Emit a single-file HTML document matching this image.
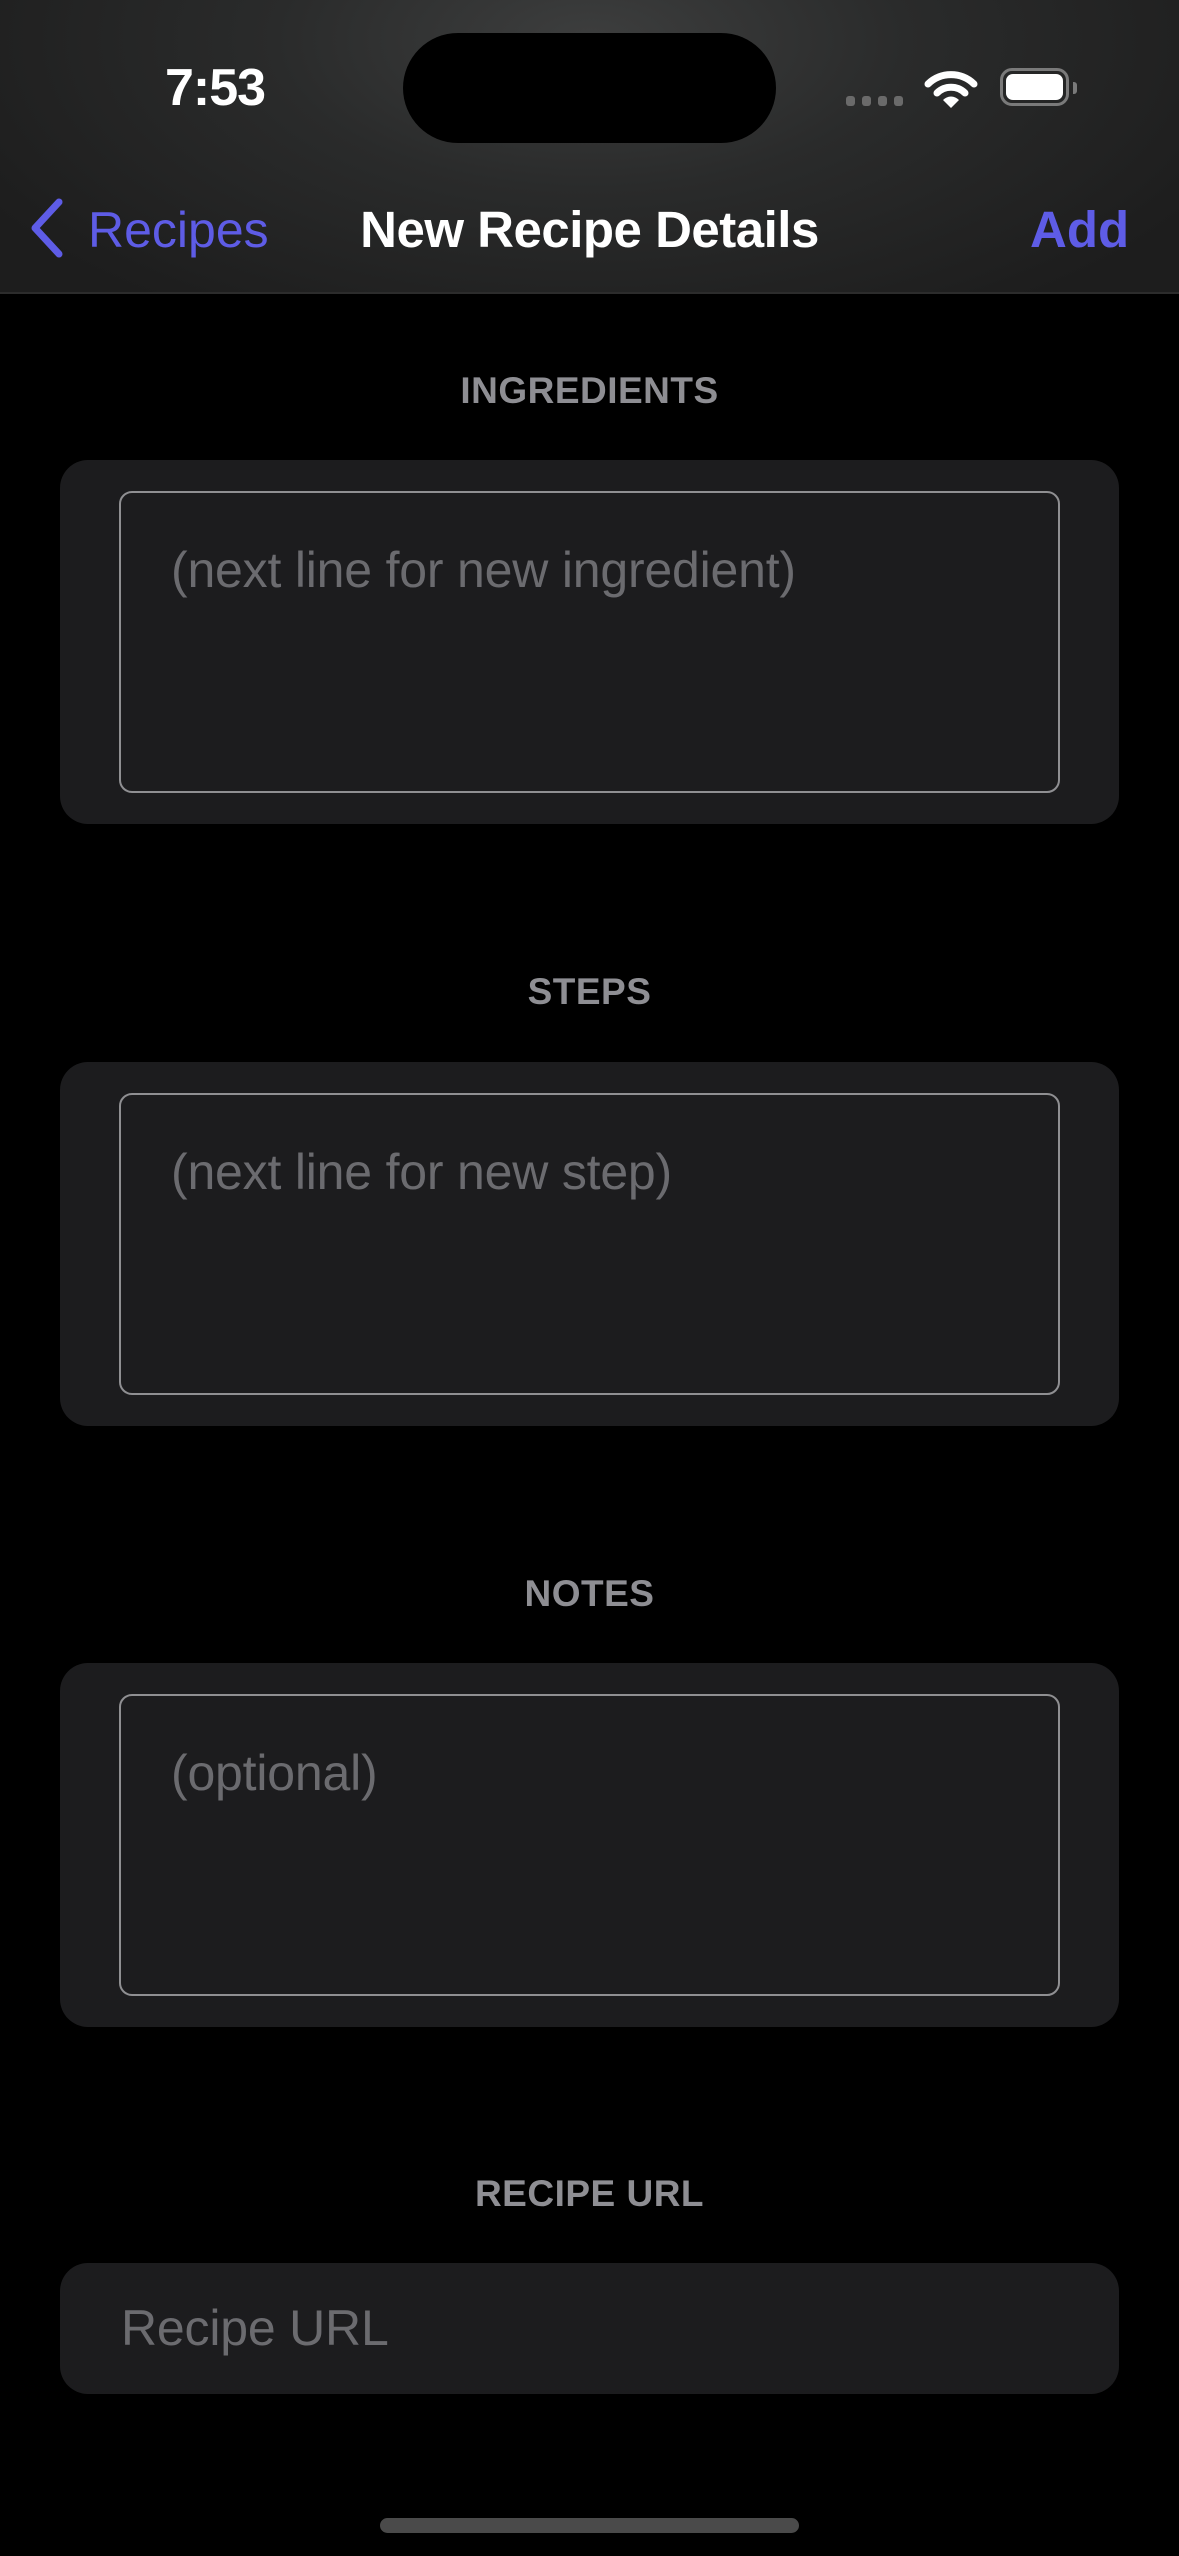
<!DOCTYPE html>
<html><head><meta charset="utf-8">
<style>
*{margin:0;padding:0;box-sizing:border-box}
html,body{width:1179px;height:2556px;background:#000;overflow:hidden}
body{position:relative;font-family:"Liberation Sans",sans-serif;-webkit-font-smoothing:antialiased}
.nav{position:absolute;left:0;top:0;width:1179px;height:294px;background:radial-gradient(ellipse 700px 330px at 590px 40px,#3d3e3e 0%,#2a2b2b 45%,#1d1d1d 100%);border-bottom:2px solid #2c2c2c}
.abs{position:absolute}
.time{left:150px;top:58px;font-size:52px;font-weight:bold;color:#fff;width:130px;text-align:center;letter-spacing:-1px}
.island{left:403px;top:33px;width:373px;height:110px;background:#000;border-radius:55px}
.navtxt{top:200px;font-size:51px;line-height:60px}
.hdr{width:1179px;left:0;text-align:center;color:#8e8e93;font-size:37px;font-weight:bold;letter-spacing:0.5px}
.card{left:60px;width:1059px;height:364px;background:#1c1c1e;border-radius:28px}
.ta{left:59px;top:31px;width:941px;height:302px;border:2.5px solid #8f8f92;border-radius:13px}
.ph{position:absolute;left:50px;top:48px;font-size:50px;color:#6b6b6f;letter-spacing:-0.2px;white-space:nowrap}
</style></head><body>
<div class="nav">
  <div class="abs time">7:53</div>
  <div class="abs island"></div>
  <div class="abs" style="left:846px;top:96px;width:9px;height:10px;background:#6a6a6a;border-radius:3px"></div>
  <div class="abs" style="left:862px;top:96px;width:9px;height:10px;background:#6a6a6a;border-radius:3px"></div>
  <div class="abs" style="left:878px;top:96px;width:9px;height:10px;background:#6a6a6a;border-radius:3px"></div>
  <div class="abs" style="left:894px;top:96px;width:9px;height:10px;background:#6a6a6a;border-radius:3px"></div>
  <svg class="abs" style="left:924px;top:66px" width="54" height="44" viewBox="0 0 54 44">
    <path d="M4 18 A33 33 0 0 1 50 18" fill="none" stroke="#fff" stroke-width="7" stroke-linecap="round"/>
    <path d="M13 27 A20 20 0 0 1 41 27" fill="none" stroke="#fff" stroke-width="7" stroke-linecap="round"/>
    <path d="M27 42 L19 34 A11 11 0 0 1 35 34 Z" fill="#fff"/>
  </svg>
  <div class="abs" style="left:1000px;top:68px;width:69px;height:38px;border:3px solid #7a7a7a;border-radius:12px"></div>
  <div class="abs" style="left:1006px;top:74px;width:57px;height:26px;background:#fff;border-radius:7px"></div>
  <div class="abs" style="left:1073px;top:82px;width:4px;height:12px;background:#7a7a7a;border-radius:0 3px 3px 0"></div>

  <svg class="abs" style="left:26px;top:197px" width="40" height="62" viewBox="0 0 40 62">
    <path d="M33 5 L9 31 L33 57" fill="none" stroke="#5e5ce6" stroke-width="7" stroke-linecap="round" stroke-linejoin="round"/>
  </svg>
  <div class="abs navtxt" style="left:88px;color:#5e5ce6;font-size:50px">Recipes</div>
  <div class="abs navtxt" style="left:0;width:1179px;text-align:center;color:#fff;font-weight:bold;letter-spacing:-0.5px">New Recipe Details</div>
  <div class="abs navtxt" style="left:1030px;color:#5e5ce6;font-weight:bold">Add</div>
</div>

<div class="abs hdr" style="top:370px">INGREDIENTS</div>
<div class="abs card" style="top:460px"><div class="abs ta"><div class="ph">(next line for new ingredient)</div></div></div>

<div class="abs hdr" style="top:971px">STEPS</div>
<div class="abs card" style="top:1062px"><div class="abs ta"><div class="ph">(next line for new step)</div></div></div>

<div class="abs hdr" style="top:1573px">NOTES</div>
<div class="abs card" style="top:1663px"><div class="abs ta"><div class="ph">(optional)</div></div></div>

<div class="abs hdr" style="top:2173px">RECIPE URL</div>
<div class="abs" style="left:60px;top:2263px;width:1059px;height:131px;background:#1c1c1e;border-radius:28px">
  <div class="abs" style="left:61px;top:36px;font-size:50px;color:#6b6b6f;letter-spacing:-0.2px">Recipe URL</div>
</div>

<div class="abs" style="left:380px;top:2518px;width:419px;height:15px;background:#4a4a4a;border-radius:8px"></div>
</body></html>
